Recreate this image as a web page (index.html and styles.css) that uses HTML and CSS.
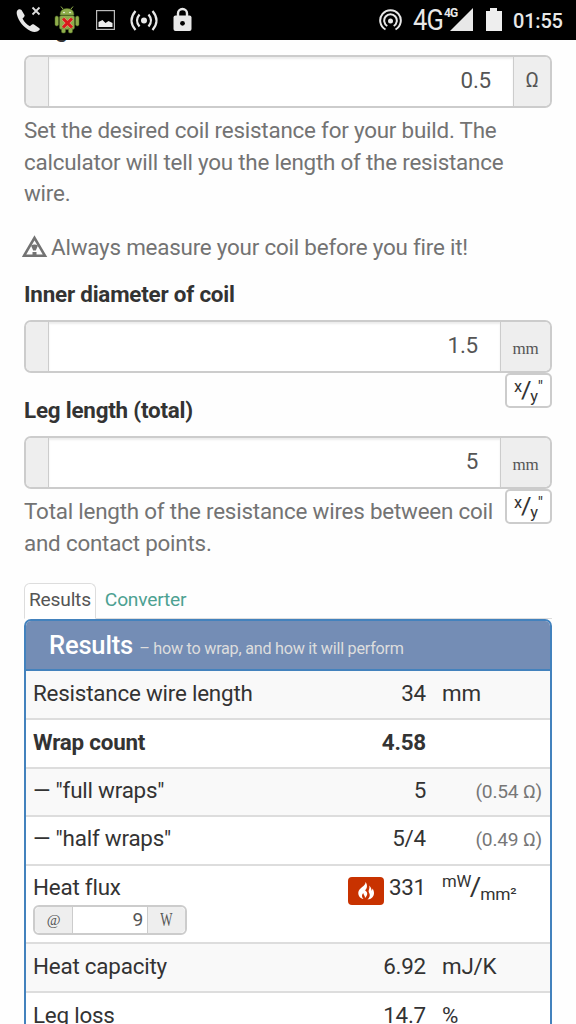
FILE: index.html
```html
<!DOCTYPE html>
<html lang="en">
<head>
  <meta charset="UTF-8">
  <meta name="viewport" content="width=device-width, initial-scale=1.0">
  <title>Coil calculator</title>
  <link rel="stylesheet" href="styles.css">
</head>
<body>
  <header class="statusbar">
    <svg class="status-icons" width="200" height="40" viewBox="0 0 200 40">
      <path d="M17 11c1-2 3-2.500 4.500-1l3 5c.5 1-.2 2-2 3.500 2 4 4.500 6.200 7.500 7.700 2-2 3-2.200 4-1.600l5 3.400c1 .8 1 1.500 0 2.300-2 2-5 2.200-8.500.7-7-3.500-12-10-13.500-16-.4-1.700-.4-3 0-4z" fill="#e8e8e8"/>
      <path d="M32.500 7.500l7 7m0-7l-7 7" stroke="#ddd" stroke-width="1.800"/>
      <g fill="#8fae4b" stroke="#526d25" stroke-width=".5">
        <path d="M60 15q0-6.500 7-6.500t7 6.500z"/>
        <rect x="59.500" y="15.500" width="15" height="14" rx="2"/>
        <rect x="55" y="16" width="3.500" height="10" rx="1.700"/>
        <rect x="75.500" y="16" width="3.500" height="10" rx="1.700"/>
        <rect x="61.500" y="28" width="4" height="5" rx="1.500"/>
        <rect x="68.500" y="28" width="4" height="5" rx="1.500"/>
      </g>
      <path d="M63 9l-2-2.500m10 2.500l2-2.500" stroke="#8fae4b"/>
      <circle cx="64" cy="12.500" r=".8" fill="#fff"/><circle cx="70" cy="12.500" r=".8" fill="#fff"/>
      <path d="M63 18.500l9 9m0-9l-9 9" stroke="#e9b08e" stroke-width="3.800"/>
      <path d="M63 18.500l9 9m0-9l-9 9" stroke="#d91b1b" stroke-width="3"/>
      <rect x="96.600" y="10.600" width="17.800" height="18.800" fill="none" stroke="#bbb" stroke-width="1.200"/>
      <path d="M98.500 27v-5l4-2 3 3 3-2 4 2v4z" fill="#eee"/>
      <circle cx="144" cy="20.500" r="3" fill="#e8e8e8"/>
      <g fill="none" stroke="#e8e8e8" stroke-width="2.200">
        <path d="M139.500 14.500q-5 6 0 12m9-12q5 6 0 12M135.500 11q-8 9.500 0 19m17-19q8 9.500 0 19"/>
        <path d="M178 17v-3.500a4.500 4.500 0 0 1 9 0V17" stroke-width="2.400"/>
      </g>
      <rect x="173.500" y="15.500" width="18" height="15.500" rx="2" fill="#e8e8e8"/>
      <circle cx="182.500" cy="23.300" r="2.400" fill="#000"/>
    </svg>
    <div class="status-right">
      <svg width="24" height="24" viewBox="0 0 24 24" fill="none" stroke="#e8e8e8" stroke-width="2">
        <path d="M6.500 21.500a10.300 10.300 0 1 1 10 0M8.300 18a6.300 6.300 0 1 1 6.400 0"/>
        <circle cx="11.500" cy="13" r="2.500" fill="#e8e8e8" stroke="none"/>
      </svg>
      <span class="network">4G</span>
      <span class="signal"><svg width="23" height="24" viewBox="0 0 23 24"><path d="M0 23L23 0v23z" fill="#e8e8e8"/></svg><small>4G</small></span>
      <svg class="battery" width="16" height="24" viewBox="0 0 16 24"><path d="M0 3h4V0h7v3h5v20H0z" fill="#eee"/></svg>
      <span class="clock">01:55</span>
    </div>
  </header>

  <main class="page">
    <label class="label">Target resistance</label>
    <div class="input-group">
      <span class="addon"></span>
      <span class="control">0.5</span>
      <span class="addon addon-ohm">Ω</span>
    </div>
    <p class="help">Set the desired coil resistance for your build. The<br>calculator will tell you the length of the resistance<br>wire.</p>
    <p class="help warning">
      <svg width="26" height="24" viewBox="0 0 26 24">
        <path d="M12.500 2.800L23 20.800H2z" fill="none" stroke="#737373" stroke-width="2.600"/>
        <path d="M9 10.500q3.500-2 7 0L13.800 15.500h-2.600zM10.500 17h4v3h-4z" fill="#737373"/>
      </svg><span>Always measure your coil before you fire it!</span>
    </p>

    <label class="label">Inner diameter of coil</label>
    <div class="input-group">
      <span class="addon"></span>
      <span class="control">1.5</span>
      <span class="addon addon-unit">mm</span>
      <span class="fraction"><sup>x</sup><i>/</i><sub>y</sub><sup>"</sup></span>
    </div>

    <label class="label label-leg">Leg length (total)</label>
    <div class="input-group">
      <span class="addon"></span>
      <span class="control">5</span>
      <span class="addon addon-unit">mm</span>
      <span class="fraction"><sup>x</sup><i>/</i><sub>y</sub><sup>"</sup></span>
    </div>
    <p class="help">Total length of the resistance wires between coil<br>and contact points.</p>

    <nav class="tabs">
      <a class="tab active">Results</a>
      <a class="tab">Converter</a>
    </nav>

    <section class="panel">
      <h3 class="panel-heading">Results <small>– how to wrap, and how it will perform</small></h3>
      <div class="row odd"><span>Resistance wire length</span><span class="value">34</span><span class="unit">mm</span></div>
      <div class="row strong"><span>Wrap count</span><span class="value">4.58</span><span class="unit"></span></div>
      <div class="row row-wraps odd"><span>— "full wraps"</span><span class="value">5</span><span class="note">(0.54 Ω)</span></div>
      <div class="row row-wraps"><span>— "half wraps"</span><span class="value">5/4</span><span class="note">(0.49 Ω)</span></div>
      <div class="row row-flux">
        <div>Heat flux
          <div class="watts"><span class="watts-addon">@</span><span class="watts-value">9</span><span class="watts-addon watts-unit"><b>W</b></span></div>
        </div>
        <span class="value value-flux">
          <span class="flame"><svg width="18" height="20" viewBox="0 0 18 20">
            <path d="M8.500 1C9 5 1.500 7 1.300 11.500c-.2 3.500 2.200 6 5.200 6.500-2-2-2-4-.3-6 .3 2 2 2.800 1.800 5C11.500 13.500 10.500 11 8 9.200c2.600-2 2.500-5.700.5-8.200z" fill="#fff"/>
            <path d="M12 4.500c1.500 3-1.500 5 .2 7.500 1.300 2.200.5 4.500-1.700 6.500 4 0 6.500-3 6.500-6.500 0-2-.8-3-1.300-4.500-.4 1-.5 1.800-1.200 2.200 0-2-.5-3.700-2.500-5.200z" fill="#fff"/>
          </svg></span>331</span>
        <span class="unit unit-fraction"><sup>mW</sup><i>/</i><sub>mm²</sub></span>
      </div>
      <div class="row odd"><span>Heat capacity</span><span class="value">6.92</span><span class="unit">mJ/K</span></div>
      <div class="row"><span>Leg loss</span><span class="value">14.7</span><span class="unit">%</span></div>
    </section>
  </main>
</body>
</html>
```
FILE: styles.css
```css
* {
    margin: 0;
    padding: 0;
    box-sizing: border-box;
}
body {
    height: 1024px;
    overflow: hidden;
    background: #fefefe;
    color: #333;
    font-family: Roboto, sans-serif;
    font-size: 22.4px;
    letter-spacing: -.21px;
    line-height: 32px;
}
sup, sub {
    line-height: 0;
    font-size: 75%;
}

/* Status bar */
.statusbar {
    position: relative;
    z-index: 2;
    display: flex;
    justify-content: space-between;
    height: 40px;
    background: #000;
    color: #e8e8e8;
}
.status-right {
    display: flex;
    align-items: center;
    width: 197px;
}
.network {
    width: 31px;
    margin-left: 10px;
    font-size: 29px;
    letter-spacing: -1px;
    line-height: 42px;
    transform: scaleX(.88);
    transform-origin: left;
}
.signal {
    position: relative;
    display: flex;
    margin-left: 6px;
}
.signal small {
    position: absolute;
    left: -6px;
    top: -2px;
    font-size: 12px;
    font-weight: 700;
    line-height: 14px;
    letter-spacing: -.8px;
}
.battery {
    margin-left: 13px;
}
.clock {
    margin-left: 11px;
    padding-top: 2px;
    font-size: 20px;
    font-weight: 500;
    white-space: nowrap;
}

/* Form */
.page {
    margin-top: -27px;
    padding: 0 24px;
}
.label {
    display: block;
    margin-bottom: 10px;
    font-weight: 700;
}
.label-leg {
    margin-top: 21px;
}
.input-group {
    position: relative;
    display: flex;
    height: 53px;
    border: 2px solid #ccc;
    border-radius: 7px;
    background: #fff;
}
.addon {
    width: 23px;
    border-right: 1px solid #ccc;
    border-radius: 5px 0 0 5px;
    background: #eee;
    color: #555;
    text-align: center;
    line-height: 47px;
}
.addon-ohm, .addon-unit {
    width: 37px;
    border-right: 0;
    border-left: 1px solid #ccc;
    border-radius: 0 5px 5px 0;
}
.addon-ohm {
    font-size: 20px;
}
.addon-unit {
    width: 50px;
    font-family: "Liberation Serif", serif;
    font-size: 17px;
    line-height: 54px;
}
.control {
    flex: 1;
    padding-right: 22px;
    box-shadow: inset 0 2px 2px rgba(0, 0, 0, .075);
    color: #555;
    text-align: right;
    line-height: 47px;
}
.fraction {
    position: absolute;
    right: -2px;
    top: 51px;
    width: 47px;
    height: 35px;
    border: 2px solid #ccc;
    border-radius: 5px;
    background: #fff;
    font-size: 20.5px;
    line-height: 31px;
    text-align: center;
}
.fraction sup, .fraction sub {
    font-size: 80%;
}
.fraction sup {
    vertical-align: 5px;
}
.fraction i, .unit-fraction i {
    display: inline-block;
    font-style: normal;
    transform: scale(1.25, 1.15);
}
.unit-fraction sub {
    font-size: 17.4px;
}
.help {
    margin-top: 7px;
    color: #737373;
    line-height: 31.7px;
    white-space: nowrap;
}
.warning {
    display: flex;
    align-items: center;
    margin: 22px 0 14px -2px;
}
.warning svg {
    margin: -2px 3px 0 0;
}

/* Tabs */
.tabs {
    display: flex;
    height: 36px;
    margin-top: 24px;
    border-bottom: 1px solid #ddd;
    font-size: 19.2px;
}
.tab {
    padding: 0 9px;
    color: #4da192;
    line-height: 34px;
}
.tab.active {
    height: 36px;
    padding: 0 4px;
    border: 1px solid #ddd;
    border-bottom-color: #fff;
    border-radius: 6px 6px 0 0;
    background: #fff;
    color: #555;
    line-height: 32px;
}

/* Results */
.panel {
    border: 2px solid #4382bd;
    border-radius: 7px 7px 0 0;
    background: #fff;
}
.panel-heading {
    height: 50px;
    padding-left: 23px;
    border-bottom: 2px solid #4382bd;
    border-radius: 5px 5px 0 0;
    background: #748db5;
    color: #fff;
    font-size: 25.6px;
    font-weight: 500;
    line-height: 49px;
    white-space: nowrap;
}
.panel-heading small {
    color: #ddd;
    font-size: 16.2px;
    font-weight: 400;
    letter-spacing: -.25px;
}
.row {
    display: grid;
    grid-template-columns: 1fr 120px 100px;
    column-gap: 16px;
    height: 48.7px;
    padding: 6px 8px 0 7px;
    border-bottom: 2px solid #ddd;
    white-space: nowrap;
}
.odd {
    background: #f9f9f9;
}
.strong {
    font-weight: 700;
}
.value {
    text-align: right;
}
.row-wraps {
    padding-top: 5px;
}
.note {
    padding-top: 2px;
    color: #777;
    font-size: 19.2px;
    text-align: right;
}
.row-flux {
    height: 78px;
    padding-top: 5px;
}
.value-flux {
    display: flex;
    justify-content: flex-end;
}
.flame {
    display: flex;
    align-items: center;
    justify-content: center;
    width: 36px;
    height: 28px;
    margin: 6px 5px 0 0;
    border-radius: 4px;
    background: #c83200;
}
.watts {
    display: flex;
    width: 154px;
    height: 30px;
    margin-top: 2px;
    border: 2px solid #ccc;
    border-radius: 6px;
    color: #555;
    font-size: 19.2px;
    line-height: 26px;
}
.watts-addon {
    width: 37px;
    border-radius: 5px 0 0 5px;
    background: #eee;
    font-family: "Liberation Serif", serif;
    font-size: 15px;
    text-align: center;
}
.watts-unit {
    border-radius: 0 5px 5px 0;
}
.watts-unit b {
    display: inline-block;
    font-size: 18px;
    font-weight: 400;
    transform: scaleX(.72);
}
.watts-value {
    flex: 1;
    padding-right: 4px;
    border: solid #ccc;
    border-width: 0 1px;
    background: #fff;
    text-align: right;
}
```
